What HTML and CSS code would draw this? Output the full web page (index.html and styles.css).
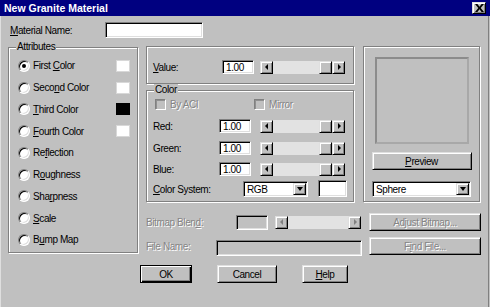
FILE: index.html
```html
<!DOCTYPE html>
<html lang="en">
<head>
    <meta charset="UTF-8">
    <meta name="viewport" content="width=device-width, initial-scale=1.0">
    <title>New Granite Material</title>
    <link rel="stylesheet" href="styles.css">
</head>
<body>
    <div class="dialog">
        <div class="titlebar">
            <span class="title">New Granite Material</span>
            <span class="close-btn raised">
                <svg width="9" height="8" viewBox="0 0 9 8"><path d="M0 0h2.4l2.1 2.7L6.6 0H9L5.7 4 9 8H6.6L4.5 5.3 2.4 8H0l3.3-4z" fill="#000"/></svg>
            </span>
        </div>

        <div class="name-row">
            <span class="name-label"><u>M</u>aterial Name:</span>
            <span class="field name-input"></span>
        </div>

        <div class="main">
            <!-- left: attribute radios -->
            <div class="group attributes">
                <span class="group-title">Attributes</span>
                <div class="radio-row"><span class="radio checked"></span><span class="radio-text">First <u>C</u>olor</span><span class="swatch"></span></div>
                <div class="radio-row"><span class="radio"></span><span class="radio-text">Seco<u>n</u>d Color</span><span class="swatch"></span></div>
                <div class="radio-row"><span class="radio"></span><span class="radio-text"><u>T</u>hird Color</span><span class="swatch black"></span></div>
                <div class="radio-row"><span class="radio"></span><span class="radio-text"><u>F</u>ourth Color</span><span class="swatch"></span></div>
                <div class="radio-row"><span class="radio"></span><span class="radio-text">Re<u>f</u>lection</span></div>
                <div class="radio-row"><span class="radio"></span><span class="radio-text">R<u>o</u>ughness</span></div>
                <div class="radio-row"><span class="radio"></span><span class="radio-text">Sha<u>r</u>pness</span></div>
                <div class="radio-row"><span class="radio"></span><span class="radio-text"><u>S</u>cale</span></div>
                <div class="radio-row"><span class="radio"></span><span class="radio-text">B<u>u</u>mp Map</span></div>
            </div>

            <div class="right">
                <div class="top-row">
                    <div class="middle">
                        <div class="group value-group">
                            <div class="form-row">
                                <span class="row-label value-label"><u>V</u>alue:</span>
                                <span class="field num">1.00</span>
                                <div class="scrollbar value-sb">
                                    <span class="sb-btn raised"><span class="arrow-left"></span></span>
                                    <span class="sb-track"></span>
                                    <span class="sb-thumb raised"></span>
                                    <span class="sb-btn raised"><span class="arrow-right"></span></span>
                                </div>
                            </div>
                        </div>

                        <div class="group color-group">
                            <span class="group-title">Color</span>
                            <div class="check-row">
                                <span class="check-item disabled"><span class="checkbox"></span>By ACI</span>
                                <span class="check-item disabled"><span class="checkbox"></span>Mirror</span>
                            </div>
                            <div class="form-row red-row">
                                <span class="row-label">Red:</span>
                                <span class="field num">1.00</span>
                                <div class="scrollbar">
                                    <span class="sb-btn raised"><span class="arrow-left"></span></span>
                                    <span class="sb-track"></span>
                                    <span class="sb-thumb raised"></span>
                                    <span class="sb-btn raised"><span class="arrow-right"></span></span>
                                </div>
                            </div>
                            <div class="form-row green-row">
                                <span class="row-label">Green:</span>
                                <span class="field num">1.00</span>
                                <div class="scrollbar">
                                    <span class="sb-btn raised"><span class="arrow-left"></span></span>
                                    <span class="sb-track"></span>
                                    <span class="sb-thumb raised"></span>
                                    <span class="sb-btn raised"><span class="arrow-right"></span></span>
                                </div>
                            </div>
                            <div class="form-row blue-row">
                                <span class="row-label">Blue:</span>
                                <span class="field num">1.00</span>
                                <div class="scrollbar">
                                    <span class="sb-btn raised"><span class="arrow-left"></span></span>
                                    <span class="sb-track"></span>
                                    <span class="sb-thumb raised"></span>
                                    <span class="sb-btn raised"><span class="arrow-right"></span></span>
                                </div>
                            </div>
                            <div class="form-row system-row">
                                <span class="row-label system-label"><u>C</u>olor System:</span>
                                <span class="field select rgb-select">
                                    <span class="select-text">RGB</span>
                                    <span class="dd-btn raised"><span class="arrow-down"></span></span>
                                </span>
                                <span class="field color-swatch"></span>
                            </div>
                        </div>
                    </div>

                    <div class="group preview-group">
                        <div class="preview-box"></div>
                        <span class="btn raised preview-btn"><u>P</u>review</span>
                        <span class="field select sphere-select">
                            <span class="select-text">Sphere</span>
                            <span class="dd-btn raised"><span class="arrow-down"></span></span>
                        </span>
                    </div>
                </div>

                <div class="bitmap-row">
                    <span class="disabled blend-label">Bitmap Blen<u>d</u>:</span>
                    <span class="field off blend-box"></span>
                    <div class="scrollbar blend-sb">
                        <span class="sb-btn raised"><span class="arrow-left off-arrow"></span></span>
                        <span class="sb-track"></span>
                        <span class="sb-btn raised"><span class="arrow-right off-arrow"></span></span>
                    </div>
                    <span class="btn raised side-btn disabled">Adjust Bitmap...</span>
                </div>
                <div class="bitmap-row file-row">
                    <span class="disabled file-label">File Name:</span>
                    <span class="field off file-box"></span>
                    <span class="btn raised side-btn disabled">F<u>i</u>nd File...</span>
                </div>
            </div>
        </div>

        <div class="buttons">
            <span class="btn default ok-btn">OK</span>
            <span class="btn raised cancel-btn">Cancel</span>
            <span class="btn raised help-btn"><u>H</u>elp</span>
        </div>
    </div>
</body>
</html>
```

FILE: styles.css
```css
/* General Reset */
* {
    margin: 0;
    padding: 0;
    box-sizing: border-box;
}

body {
    width: 490px;
    height: 307px;
    overflow: hidden;
    background-color: #c0c0c0;
    font-family: "Liberation Sans", Arial, sans-serif;
    font-size: 10px;
    letter-spacing: -0.4px;
    color: #000;
}

u {
    text-decoration: underline;
    text-underline-offset: 1px;
}

.dialog {
    width: 490px;
    height: 307px;
    background-color: #c0c0c0;
    box-shadow: inset 1px 0 #dfdfdf, inset -1px 0 #c0c0c0, inset -2px 0 #808080;
}

/* 3D borders */
.raised {
    border: 1px solid;
    border-color: #dfdfdf #000 #000 #dfdfdf;
    box-shadow: inset 1px 1px #fff, inset -1px -1px #808080;
    background-color: #c0c0c0;
}

.field {
    display: flex;
    align-items: center;
    border: 1px solid;
    border-color: #808080 #fff #fff #808080;
    box-shadow: inset 1px 1px #000, inset -1px -1px #dfdfdf;
    background-color: #fff;
}

.field.off {
    background-color: #c0c0c0;
}

.disabled {
    color: #858585;
    text-shadow: 1px 1px 0 #fff;
}

/* Title bar */
.titlebar {
    height: 16px;
    background-color: #000080;
    color: #fff;
    display: flex;
    align-items: center;
    justify-content: space-between;
    padding: 0 4px 0 4px;
}

.title {
    font-weight: bold;
    font-size: 10.5px;
    letter-spacing: 0;
}

.close-btn {
    width: 14px;
    height: 12px;
    display: flex;
    align-items: center;
    justify-content: center;
}

/* Material name */
.name-row {
    display: flex;
    align-items: center;
    height: 16px;
    margin-top: 6px;
    padding-left: 10px;
}

.name-label {
    width: 95px;
}

.name-input {
    width: 98px;
    height: 16px;
}

.main {
    display: flex;
    margin-top: 8px;
}

/* Group boxes */
.group {
    position: relative;
    border: 1px solid #808080;
    box-shadow: 1px 1px 0 #fff, inset 1px 1px 0 #fff;
}

.group-title {
    position: absolute;
    top: -7px;
    left: 7px;
    padding: 0 1px;
    line-height: 12px;
    background-color: #c0c0c0;
}

.attributes {
    width: 130px;
    height: 206px;
    margin: 1px 0 0 8px;
    padding: 7px 7px 0 9px;
}

.radio-row {
    display: flex;
    align-items: center;
    height: 21.75px;
}

.radio {
    flex: none;
    width: 12px;
    height: 12px;
    margin-right: 3px;
    border-radius: 50%;
    border: 1px solid;
    border-color: #808080 #fff #fff #808080;
    box-shadow: inset 1px 1px #000, inset -1px -1px #dfdfdf;
    background-color: #fff;
    display: flex;
    align-items: center;
    justify-content: center;
}

.radio.checked::after {
    content: "";
    width: 4px;
    height: 4px;
    border-radius: 50%;
    background-color: #000;
}

.radio-text {
    flex: 1;
}

.swatch {
    width: 14px;
    height: 12px;
    background-color: #fff;
    border: 1px solid #d8d8d8;
}

.swatch.black {
    background-color: #000;
    border-color: #000;
}

/* Right side */
.right {
    width: 335px;
    margin-left: 8px;
    display: flex;
    flex-direction: column;
}

.top-row {
    display: flex;
    height: 156px;
}

.middle {
    width: 208px;
    display: flex;
    flex-direction: column;
}

.value-group {
    height: 38px;
    padding: 13px 0 0 6px;
}

.color-group {
    height: 112px;
    margin-top: 6px;
    padding: 8px 0 0 6px;
}

.form-row {
    display: flex;
    align-items: center;
    height: 14px;
}

.row-label {
    width: 66px;
}

.value-label {
    width: 69px;
}

.num {
    width: 32px;
    height: 14px;
    padding-left: 3px;
}

.scrollbar {
    display: flex;
    width: 85px;
    height: 13px;
    margin-left: 9px;
}

.value-sb {
    margin-left: 6px;
}

.sb-btn, .sb-thumb {
    flex: none;
    width: 13px;
    height: 13px;
    display: flex;
    align-items: center;
    justify-content: center;
}

.sb-track {
    flex: 1;
    background-color: #e2e2e2;
}

.arrow-left, .arrow-right, .arrow-down {
    width: 0;
    height: 0;
    border: 3px solid transparent;
}

.arrow-left {
    border-right: 3px solid #000;
    border-left-width: 0;
    margin-left: -1px;
}

.arrow-right {
    border-left: 3px solid #000;
    border-right-width: 0;
    margin-left: 1px;
}

.arrow-down {
    border-width: 4px 3px 0 3px;
    border-top-color: #000;
    border-left-color: transparent;
    border-right-color: transparent;
}

.off-arrow {
    border-left-color: transparent;
    border-right-color: transparent;
}

.arrow-left.off-arrow {
    border-right-color: #808080;
}

.arrow-right.off-arrow {
    border-left-color: #808080;
}

.check-row {
    display: flex;
    align-items: center;
    height: 11px;
    margin-left: 2px;
}

.check-item {
    display: flex;
    align-items: center;
    width: 101px;
}

.checkbox {
    width: 11px;
    height: 11px;
    margin-right: 4px;
    border: 1px solid;
    border-color: #808080 #fff #fff #808080;
    box-shadow: inset 1px 1px #909090;
    background-color: #c0c0c0;
}

.red-row {
    margin-top: 9px;
}

.green-row {
    margin-top: 8px;
}

.blue-row {
    margin-top: 7px;
}

.system-row {
    height: 18px;
    margin-top: 4px;
}

.system-label {
    width: 90px;
}

.select {
    padding: 1px;
}

.select-text {
    flex: 1;
    padding-left: 2px;
}

.dd-btn {
    width: 13px;
    height: 100%;
    display: flex;
    align-items: center;
    justify-content: center;
}

.rgb-select {
    width: 65px;
    height: 16px;
}

.color-swatch {
    width: 29px;
    height: 17px;
    margin-left: 10px;
    align-self: flex-start;
}

/* Preview */
.preview-group {
    width: 117px;
    height: 156px;
    margin-left: 9px;
    display: flex;
    flex-direction: column;
    align-items: center;
    padding-top: 10px;
}

.preview-box {
    width: 94px;
    height: 87px;
    border: 2px solid;
    border-color: #8c8c8c #a8a8a8 #a8a8a8 #8c8c8c;
}

.btn {
    display: flex;
    align-items: center;
    justify-content: center;
    height: 18px;
}

.preview-btn {
    width: 100px;
    margin-top: 8px;
}

.sphere-select {
    width: 99px;
    height: 16px;
    margin-top: 11px;
}

/* Bitmap rows */
.bitmap-row {
    display: flex;
    align-items: center;
    height: 18px;
    margin-top: 11px;
}

.file-row {
    margin-top: 6px;
}

.blend-label {
    width: 90px;
}

.blend-box {
    width: 32px;
    height: 15px;
}

.blend-sb {
    width: 86px;
    margin-left: 7px;
}

.side-btn {
    width: 112px;
    margin-left: 8px;
}

.file-label {
    width: 70px;
}

.file-box {
    width: 146px;
    height: 16px;
    margin-top: 4px;
}

.file-row .side-btn {
    margin-left: 7px;
}

/* Bottom buttons */
.buttons {
    display: flex;
    margin-top: 10px;
    padding-left: 140px;
}

.default {
    border: 1px solid #000;
    box-shadow: inset 1px 1px #fff, inset -1px -1px #000, inset -2px -2px #808080;
    background-color: #c0c0c0;
}

.ok-btn {
    width: 52px;
}

.cancel-btn {
    width: 60px;
    margin-left: 25px;
}

.help-btn {
    width: 46px;
    margin-left: 25px;
}
```
